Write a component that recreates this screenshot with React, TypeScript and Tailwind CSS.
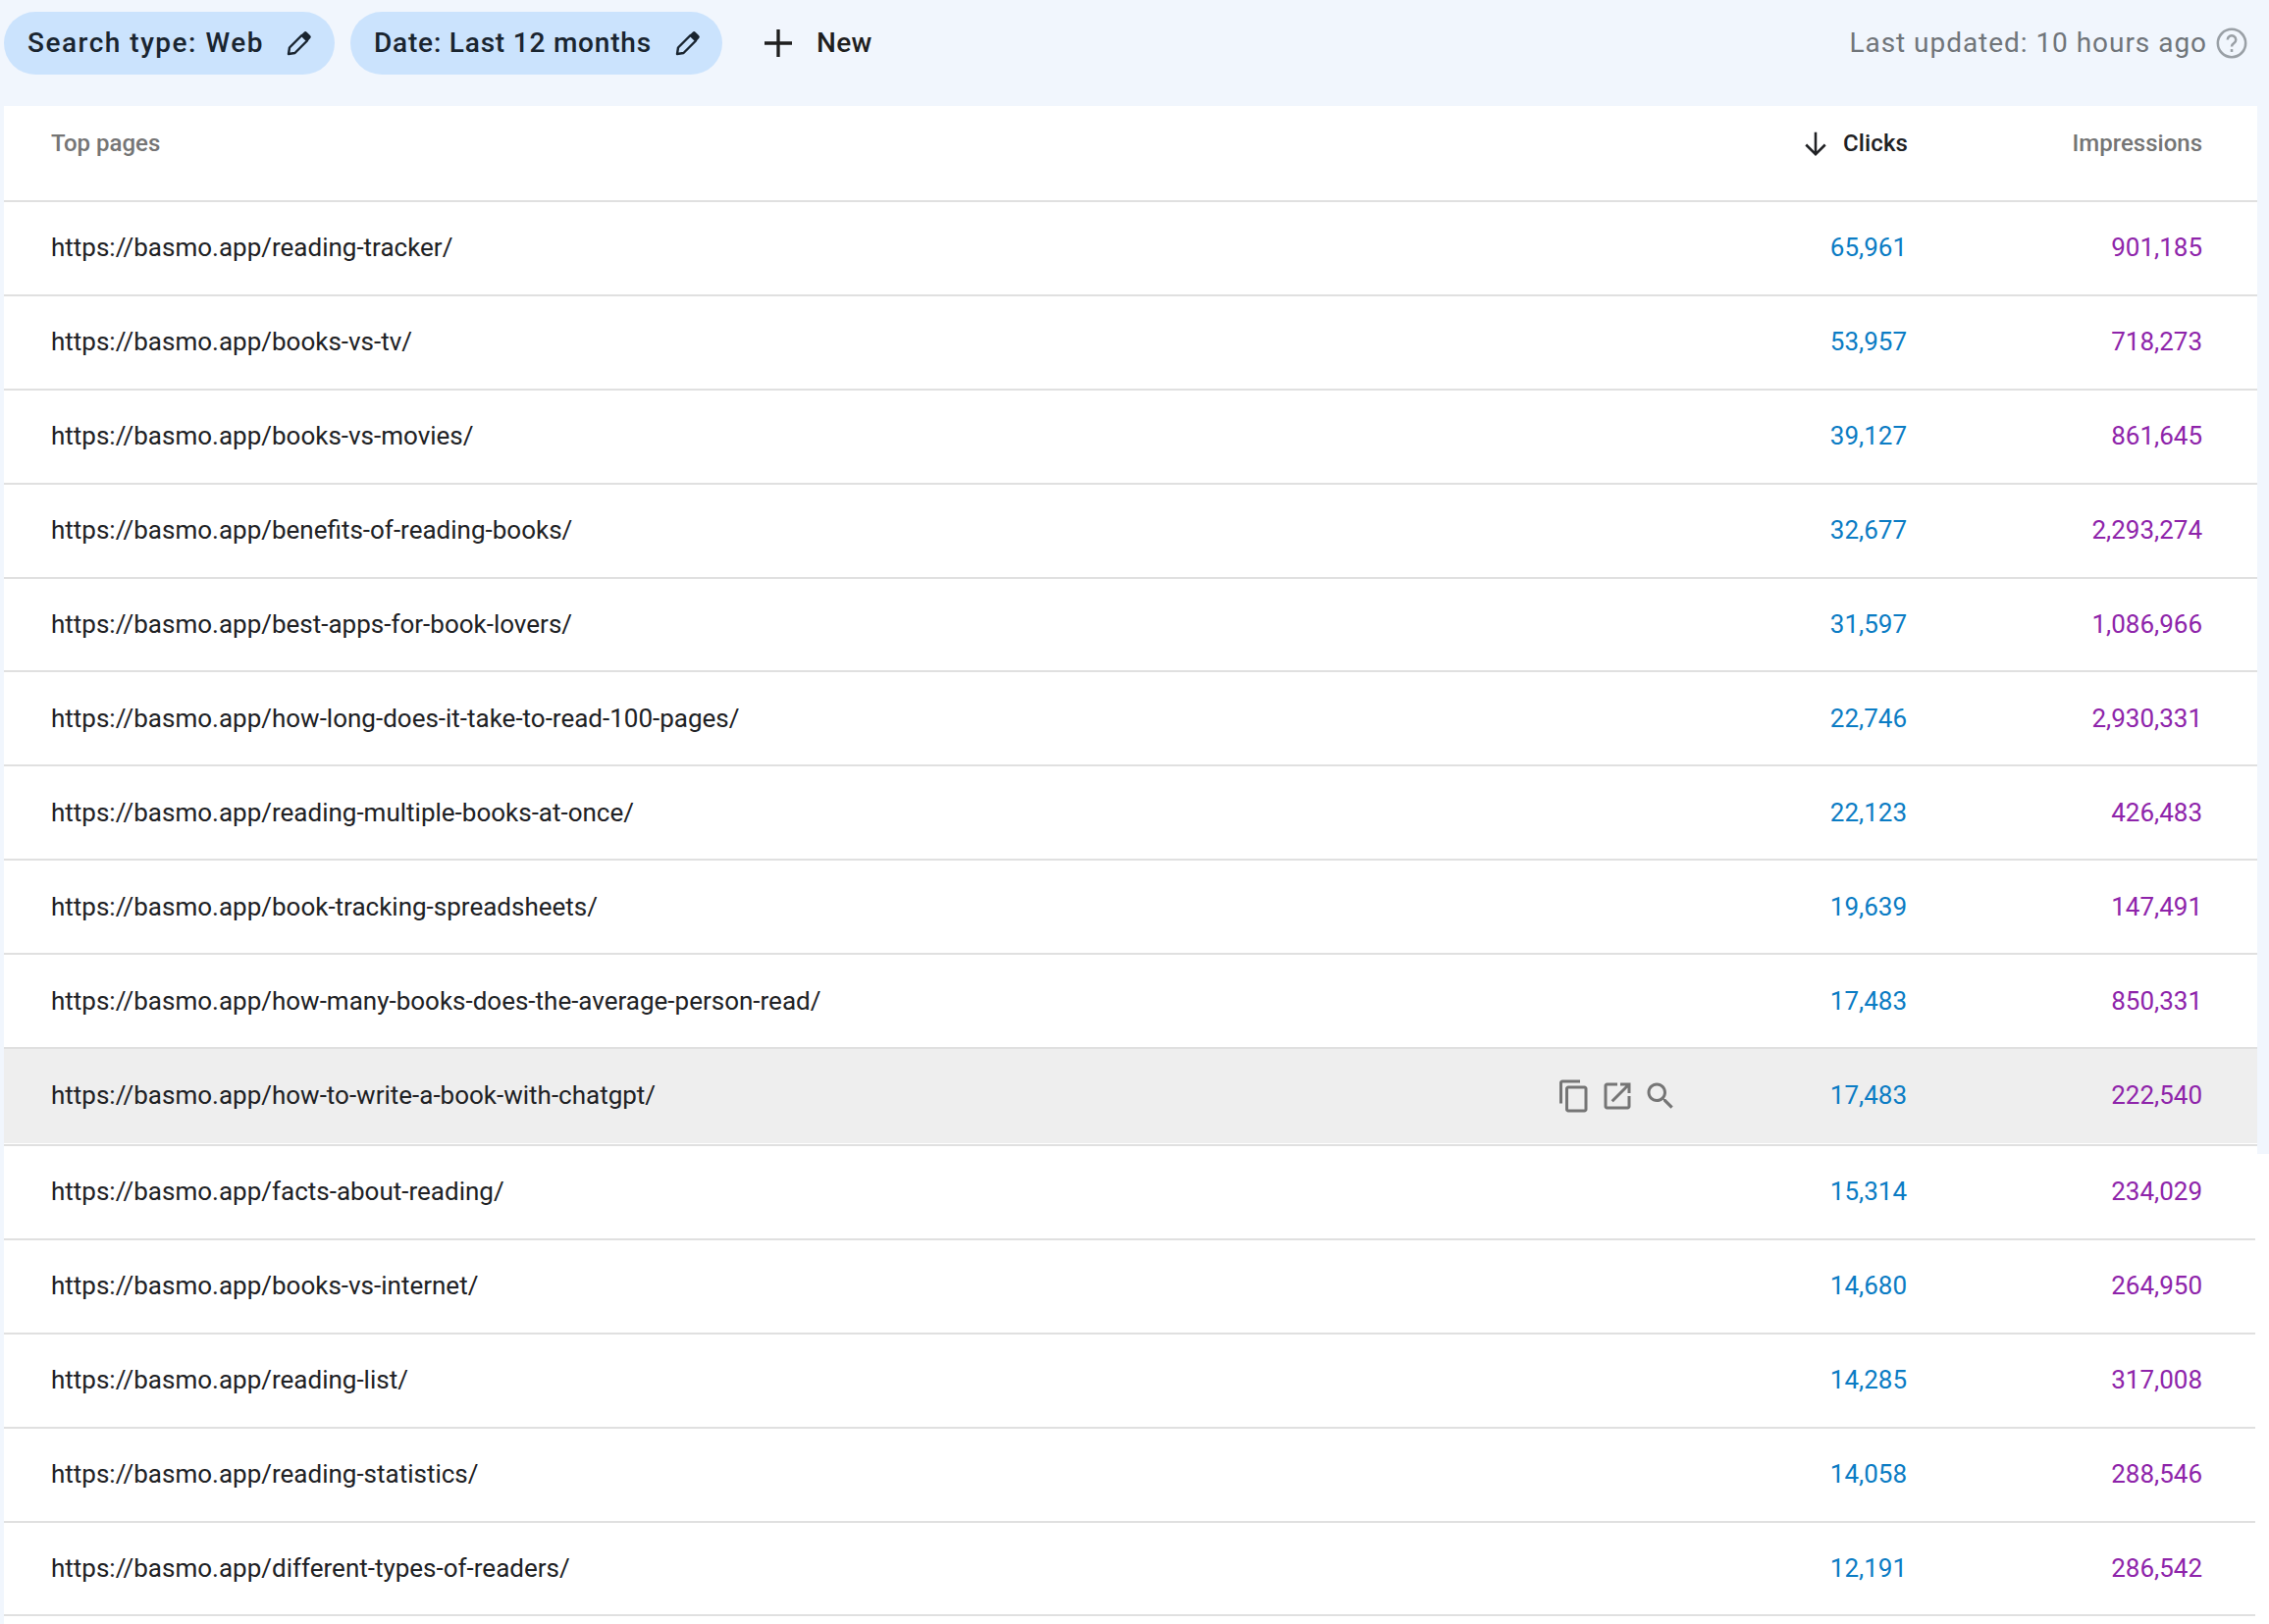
import React from "react";

const rows = [
  ["https://basmo.app/reading-tracker/", "65,961", "901,185"],
  ["https://basmo.app/books-vs-tv/", "53,957", "718,273"],
  ["https://basmo.app/books-vs-movies/", "39,127", "861,645"],
  ["https://basmo.app/benefits-of-reading-books/", "32,677", "2,293,274"],
  ["https://basmo.app/best-apps-for-book-lovers/", "31,597", "1,086,966"],
  ["https://basmo.app/how-long-does-it-take-to-read-100-pages/", "22,746", "2,930,331"],
  ["https://basmo.app/reading-multiple-books-at-once/", "22,123", "426,483"],
  ["https://basmo.app/book-tracking-spreadsheets/", "19,639", "147,491"],
  ["https://basmo.app/how-many-books-does-the-average-person-read/", "17,483", "850,331"],
];

const lowerRows = [
  ["https://basmo.app/facts-about-reading/", "15,314", "234,029"],
  ["https://basmo.app/books-vs-internet/", "14,680", "264,950"],
  ["https://basmo.app/reading-list/", "14,285", "317,008"],
  ["https://basmo.app/reading-statistics/", "14,058", "288,546"],
  ["https://basmo.app/different-types-of-readers/", "12,191", "286,542"],
];

const Pencil = () => (
  <svg width="26" height="26" viewBox="0 0 26 26" fill="none">
    <path d="M2 24l1-6.500L15.500 5l5.500 5.500L8.500 23z" stroke="#1a2530" strokeWidth="2.400" strokeLinejoin="round" />
    <path d="M15 4.500l2.800-2.800a2 2 0 0 1 2.800 0l3.600 3.600a2 2 0 0 1 0 2.800L21.500 11z" fill="#1a2530" />
  </svg>
);

const Numbers = ({ clicks, impressions }: { clicks: string; impressions: string }) => (
  <>
    <span className="w-[100px] text-right text-[#0b7cc4]">{clicks}</span>
    <span className="w-[301px] text-right text-[#8e24aa]">{impressions}</span>
  </>
);

const RowIcons = () => (
  <div className="mr-[133px] flex items-center text-[#757575]">
    <svg width="36" height="36" viewBox="0 0 24 24" fill="currentColor">
      <path d="M16 1H4c-1.100 0-2 .9-2 2v14h2V3h12V1zm3 4H8c-1.100 0-2 .9-2 2v14c0 1.100.9 2 2 2h11c1.100 0 2-.9 2-2V7c0-1.100-.9-2-2-2zm0 16H8V7h11v14z" />
    </svg>
    <svg className="ml-2" width="36" height="36" viewBox="0 0 24 24" fill="currentColor">
      <path d="M19 19H5V5h7V3H5c-1.110 0-2 .9-2 2v14c0 1.100.89 2 2 2h14c1.100 0 2-.9 2-2v-7h-2v7zM14 3v2h3.590l-9.830 9.830 1.410 1.410L19 6.410V10h2V3h-7z" />
    </svg>
    <svg className="ml-2" width="36" height="36" viewBox="0 0 24 24" fill="currentColor">
      <path d="M15.500 14h-.79l-.28-.27C15.410 12.590 16 11.110 16 9.500 16 5.910 13.090 3 9.500 3S3 5.910 3 9.500 5.910 16 9.500 16c1.610 0 3.090-.59 4.230-1.570l.27.280v.79l5 4.990L20.490 19l-4.990-5zm-6 0C7.010 14 5 11.990 5 9.500S7.010 5 9.500 5 14 7.010 14 9.500 11.990 14 9.500 14z" />
    </svg>
  </div>
);

export default function App() {
  return (
    <div className="flex h-[1655px] w-[2312px] flex-col overflow-hidden bg-[#f1f6fd] font-['Roboto',sans-serif]">
      <div className="flex h-[108px] items-start pl-1 pr-[21px] pt-3">
        <div className="flex h-16 w-[337px] items-center justify-between rounded-[32px] bg-[#cbe3fd] pl-6 pr-[23px] text-[28px] font-medium tracking-[1.500px] text-[#1a2530]">
          <span>Search type: Web</span>
          <Pencil />
        </div>
        <div className="ml-4 flex h-16 w-[379px] items-center justify-between rounded-[32px] bg-[#cbe3fd] pl-6 pr-[22px] text-[28px] font-medium tracking-[0.800px] text-[#1a2530]">
          <span>Date: Last 12 months</span>
          <Pencil />
        </div>
        <div className="ml-9 flex h-16 items-center text-[28px] font-medium text-[#1f1f1f]">
          <svg width="42" height="42" viewBox="0 0 24 24" fill="none" stroke="#1f1f1f" strokeWidth="1.900">
            <path d="M12 4v16M4 12h16" />
          </svg>
          <span className="ml-[18px] tracking-[0.300px]">New</span>
        </div>
        <div className="ml-auto flex h-16 items-center text-[28px] tracking-[0.960px] text-[#70757a]">
          <span>Last updated: 10 hours ago</span>
          <svg className="ml-2" width="34" height="34" viewBox="0 0 24 24" fill="none" stroke="#9aa0a6" strokeWidth="1.800">
            <circle cx="12" cy="12" r="10" />
            <path d="M9 9.500a3 3 0 1 1 4.500 2.600c-1 .6-1.500 1.200-1.500 2.400" />
            <path d="M12 16.300v2" />
          </svg>
        </div>
      </div>

      <div className="relative ml-1 mr-3 bg-white">
        <div className="flex h-[98px] border-b-2 border-[#e0e0e0] pl-12 pr-14 pt-5 text-[24px] font-medium text-[#757575]">
          <span className="flex-1">Top pages</span>
          <span className="flex items-start tracking-[0.100px] text-[#202124]">
            <svg width="36" height="36" viewBox="0 0 24 24" fill="none" stroke="#202124" strokeWidth="1.700">
              <path d="M12 4.500v15M5.500 13L12 19.500 18.500 13" />
            </svg>
            <span className="ml-[10px]">Clicks</span>
          </span>
          <span className="w-[300px] text-right">Impressions</span>
        </div>

        {rows.map(([url, clicks, impressions]) => (
          <div key={url} className="flex h-[95.9px] items-center border-b-2 border-[#e0e0e0] pl-12 pr-14 text-[26px] text-[#202124]">
            <span className="flex-1">{url}</span>
            <Numbers clicks={clicks} impressions={impressions} />
          </div>
        ))}

        <div className="h-[99px] border-b-2 border-[#e0e0e0] pb-px">
          <div className="flex h-full items-center bg-[#eeeeee] pb-px pl-12 pr-14 text-[26px] text-[#202124]">
            <span className="flex-1">https://basmo.app/how-to-write-a-book-with-chatgpt/</span>
            <RowIcons />
            <Numbers clicks="17,483" impressions="222,540" />
          </div>
        </div>

        <div className="absolute left-full top-full h-2 w-3 bg-[#f1f6fd]" />
      </div>

      <div className="ml-1 flex-1 bg-white pr-[14px]">
        {lowerRows.map(([url, clicks, impressions]) => (
          <div key={url} className="flex h-[95.9px] items-center border-b-2 border-[#e0e0e0] pl-12 pr-[54px] text-[26px] text-[#202124]">
            <span className="flex-1">{url}</span>
            <Numbers clicks={clicks} impressions={impressions} />
          </div>
        ))}
      </div>
    </div>
  );
}
